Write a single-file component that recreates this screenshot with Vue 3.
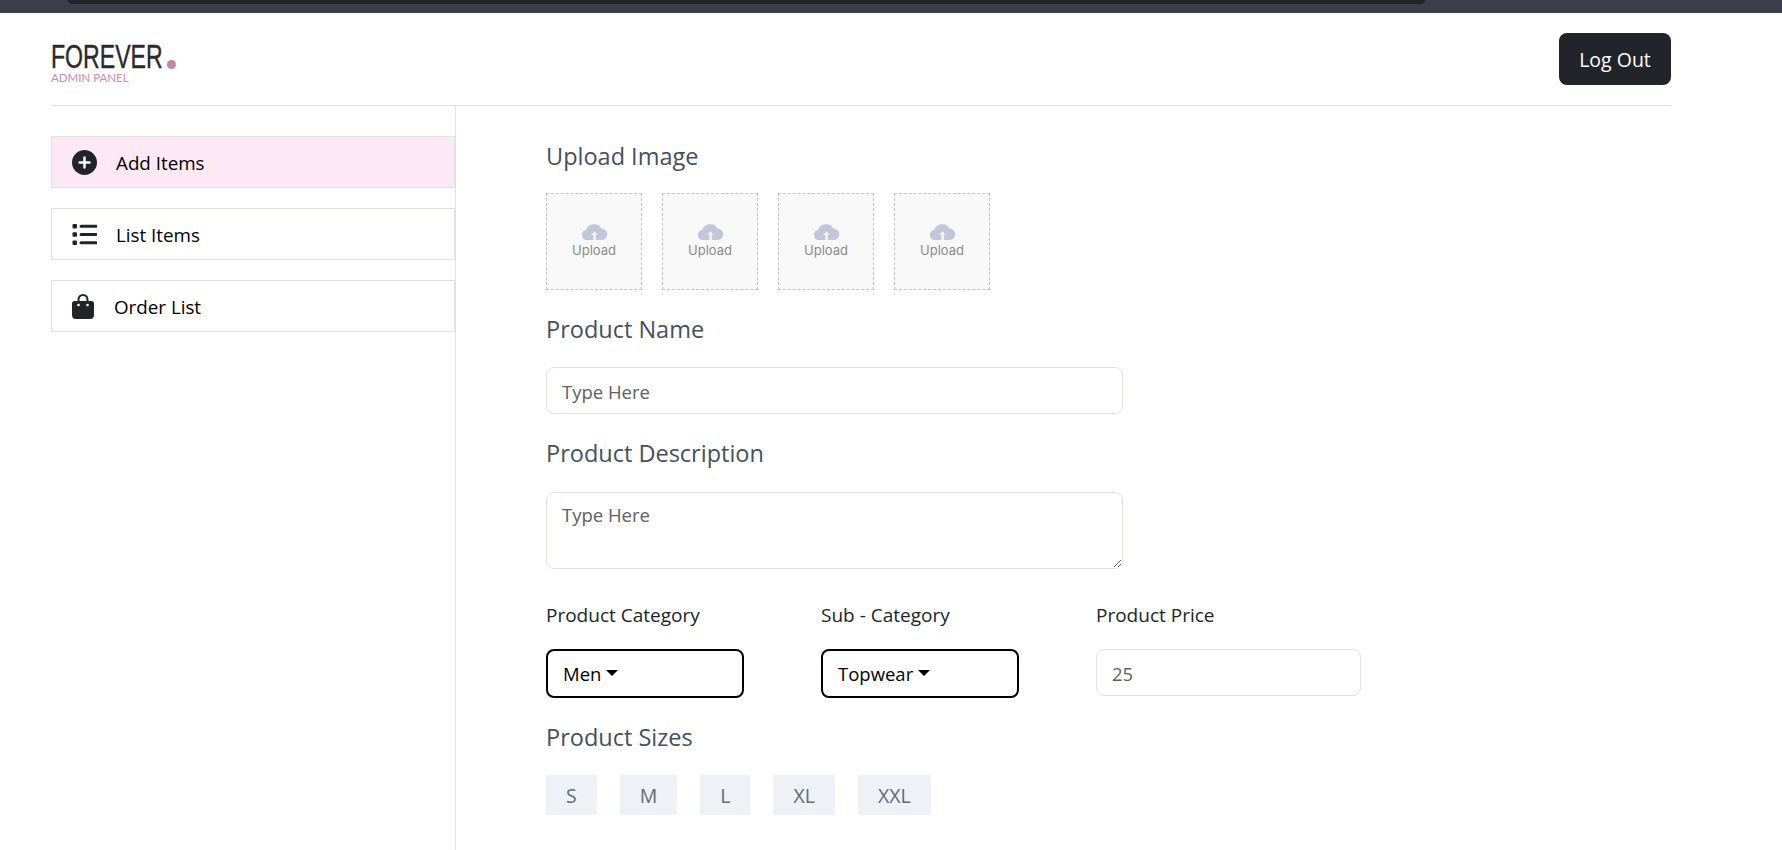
<script setup>
const menu = [
  { label: 'Add Items', icon: 'plus', active: true },
  { label: 'List Items', icon: 'list', active: false },
  { label: 'Order List', icon: 'bag', active: false },
];
const uploads = [1, 2, 3, 4];
const sizes = ['S', 'M', 'L', 'XL', 'XXL'];
</script>

<template>
  <div class="page">
    <div class="browser-strip"><div class="browser-inner"></div></div>
    <header class="nav">
      <div class="logo">
        <div class="logo-word"><span class="logo-text">FOREVER</span><span class="logo-dot"></span></div>
        <div class="logo-sub">ADMIN PANEL</div>
      </div>
      <button class="logout">Log Out</button>
    </header>
    <div class="body">
      <aside class="side">
        <a v-for="m in menu" :key="m.label" class="side-item" :class="{ active: m.active, bag: m.icon === 'bag' }">
          <svg v-if="m.icon === 'plus'" class="ico" viewBox="0 0 25 25">
            <circle cx="12.5" cy="12.5" r="12.5" fill="#212529" />
            <path d="M12.5 7.500v10M7.500 12.500h10" stroke="#fff" stroke-width="2.400" stroke-linecap="round" />
          </svg>
          <svg v-else-if="m.icon === 'list'" class="ico" viewBox="0 0 25 25">
            <rect x="0.500" y="2" width="4.500" height="4.500" rx="1" fill="#212529" />
            <rect x="0.500" y="10.200" width="4.500" height="4.500" rx="1" fill="#212529" />
            <rect x="0.500" y="18.500" width="4.500" height="4.500" rx="1" fill="#212529" />
            <path d="M9 4.200h15M9 12.500h15M9 20.800h15" stroke="#212529" stroke-width="3" stroke-linecap="round" />
          </svg>
          <svg v-else class="ico ico-bag" viewBox="0 0 22 25">
            <path d="M6.500 8V5.500a4.500 4.500 0 0 1 9 0V8" fill="none" stroke="#212529" stroke-width="2" />
            <path d="M2.500 7h17A2.500 2.500 0 0 1 22 9.500V21a4 4 0 0 1-4 4H4a4 4 0 0 1-4-4V9.500A2.500 2.500 0 0 1 2.500 7z" fill="#212529" />
            <circle cx="6.500" cy="11" r="1.300" fill="#fff" />
            <circle cx="15.500" cy="11" r="1.300" fill="#fff" />
          </svg>
          <span class="side-text">{{ m.label }}</span>
        </a>
      </aside>
      <main class="main">
        <p class="label">Upload Image</p>
        <div class="uploads">
          <div v-for="u in uploads" :key="u" class="upload">
            <svg class="cloud" viewBox="0 0 27 17">
              <path d="M6 17a5 5 0 0 1-1-9.900A8.500 8.500 0 0 1 20.500 5.500 5.800 5.800 0 0 1 21.500 17z" fill="#c1c6d9" />
              <path d="M13.500 8.500l-3.200 3.300h2V17h2.400v-5.200h2z" fill="#f8f8f8" />
            </svg>
            <span>Upload</span>
          </div>
        </div>
        <p class="label name-label">Product Name</p>
        <input class="field name" type="text" placeholder="Type Here" />
        <p class="label desc-label">Product Description</p>
        <textarea class="field desc" placeholder="Type Here"></textarea>
        <div class="row">
          <div class="col">
            <p class="small-label">Product Category</p>
            <button class="drop">Men<i class="caret"></i></button>
          </div>
          <div class="col">
            <p class="small-label">Sub - Category</p>
            <button class="drop">Topwear<i class="caret"></i></button>
          </div>
          <div class="col price-col">
            <p class="small-label">Product Price</p>
            <input class="field price" type="text" placeholder="25" />
          </div>
        </div>
        <p class="label size-label">Product Sizes</p>
        <div class="sizes">
          <span v-for="s in sizes" :key="s" class="size">{{ s }}</span>
        </div>
      </main>
    </div>
  </div>
</template>

<style>
html, body { margin: 0; background: #fff; overflow: hidden; }
</style>

<style scoped>
.page { height: 850px; display: flex; flex-direction: column; font-family: "Open Sans", "Noto Sans", sans-serif; color: #212529; overflow: hidden; }
.browser-strip { height: 13px; background: #3c3e49; flex: none; }
.browser-inner { height: 4px; margin: 0 357px 0 68px; background: #22242c; border-radius: 0 0 14px 14px; }
.nav { flex: none; height: 92px; margin: 0 111px 0 51px; display: flex; align-items: center; justify-content: space-between; border-bottom: 1px solid #dee2e6; }
.logo { margin-top: 9px; }
.logo-word { display: flex; align-items: flex-end; height: 26px; }
.logo-text { display: inline-block; width: 113px; font-family: "Liberation Sans", sans-serif; font-size: 33px; line-height: 26px; color: #2b2b2b; -webkit-text-stroke: 0.4px #2b2b2b; transform: scaleX(0.7); transform-origin: left center; white-space: nowrap; }
.logo-dot { width: 9px; height: 9px; border-radius: 50%; background: #c586a5; margin-bottom: 1px; margin-left: 3px; }
.logo-sub { font-family: "Lato", sans-serif; font-size: 11.500px; line-height: 13px; color: #cf8cae; margin-top: 1px; }
.logout { width: 112px; height: 52px; border: 0; border-radius: 8px; background: #212529; color: #fff; font: 19.500px "Open Sans", sans-serif; }
.body { flex: 1; display: flex; min-height: 0; }
.side { width: 404px; margin-left: 51px; padding-top: 30px; border-right: 1px solid #dee2e6; box-sizing: content-box; display: flex; flex-direction: column; gap: 20px; }
.side-item { height: 52px; box-sizing: border-box; border: 1px solid #dee2e6; display: flex; align-items: center; padding-left: 20px; font-size: 18.800px; color: #000; }
.side-item.active { background: #fde9f5; }
.side-text { margin-top: 1px; }
.ico { width: 25px; height: 25px; margin-right: 19px; flex: none; }
.ico-bag { width: 22px; margin-right: 20px; }
.main { flex: 1; padding: 0 0 0 90px; }
p { margin: 0; }
.label { font-size: 23.500px; line-height: 30px; color: #46505e; }
.main > .label:first-child { margin-top: 35px; }
.uploads { display: flex; gap: 20px; margin-top: 22px; }
.upload { width: 96px; height: 97px; box-sizing: border-box; border: 1px dashed #c2c2c2; padding-bottom: 2px; background: #f8f8f8; display: flex; flex-direction: column; align-items: center; justify-content: center; font: 13px "Inter", sans-serif; color: #8b8b8b; }
.cloud { width: 27px; height: 17px; margin-bottom: 2px; }
.name-label { margin-top: 24px; }
.field { display: block; box-sizing: border-box; border: 1px solid #dee2e6; border-radius: 8px; background: #fff; font: 18.500px "Open Sans", sans-serif; color: #212529; padding: 1px 15px 0; outline: none; margin: 0; }
.field::placeholder { color: #5d6066; opacity: 1; }
.name { width: 577px; height: 47px; margin-top: 23px; }
.desc-label { margin-top: 24px; }
.desc { width: 577px; height: 77px; margin-top: 24px; padding-top: 10px; line-height: 24px; }
.row { display: flex; margin-top: 33px; }
.col { width: 275px; }
.price-col { width: 265px; }
.small-label { font-size: 19px; line-height: 26px; color: #212529; }
.drop { display: flex; align-items: center; width: 198px; height: 49px; margin-top: 21px; padding: 0 15px; box-sizing: border-box; border: 2px solid #000; border-radius: 8px; background: #fff; color: #000; font: 18.500px "Open Sans", sans-serif; }
.caret { width: 0; height: 0; border: 6px solid transparent; border-top-color: #000; border-bottom: 0; margin-left: 5px; margin-bottom: 1px; }
.price { width: 265px; height: 47px; margin-top: 21px; }
.size-label { margin-top: 24px; }
.sizes { display: flex; gap: 23px; margin-top: 23px; }
.size { display: flex; align-items: center; justify-content: center; height: 40px; padding: 0 20px; background: #eef1f5; color: #646b76; font-size: 19.500px; }
</style>
